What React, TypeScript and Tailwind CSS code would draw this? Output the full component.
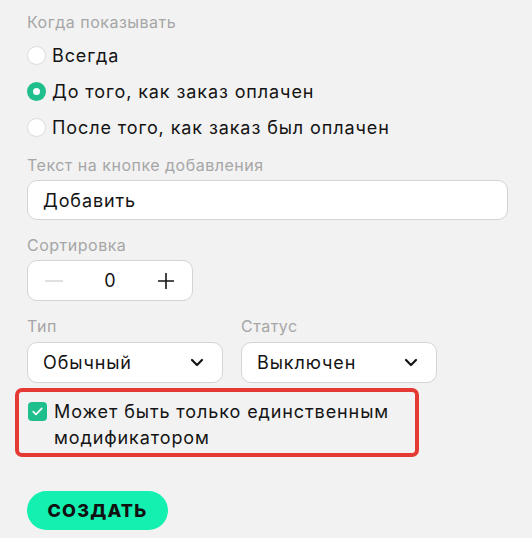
import { useState } from "react";

const Label = ({ children }: { children: React.ReactNode }) => (
  <p className="text-[16px] leading-[20px] tracking-[0.5px] text-[#a6a6a6]">{children}</p>
);

const Radio = ({ checked, label }: { checked: boolean; label: string }) => (
  <div className="flex items-center h-[36px] gap-[6px]">
    {checked ? (
      <span className="w-[19px] h-[19px] rounded-full bg-[#1fbf8d] flex items-center justify-center">
        <span className="w-[7px] h-[7px] rounded-full bg-white" />
      </span>
    ) : (
      <span className="w-[19px] h-[19px] rounded-full bg-white border border-[#dcdcdc]" />
    )}
    <span className="text-[18px] tracking-[0.9px] text-[#141414]">{label}</span>
  </div>
);

const Select = ({ value }: { value: string }) => (
  <div className="flex items-center justify-between w-[196px] h-[41px] bg-white border border-[#d4d4d4] rounded-[10px] pl-[15px] pr-[18px]">
    <span className="text-[18px] tracking-[0.9px] text-[#141414]">{value}</span>
    <svg width="14" height="9" viewBox="0 0 14 9" fill="none">
      <path d="M2 2l5 5 5-5" stroke="#141414" strokeWidth="2.2" strokeLinecap="round" strokeLinejoin="round" />
    </svg>
  </div>
);

const App = () => {
  const [sort, setSort] = useState(0);

  return (
    <div
      className="min-h-[538px] w-[532px] bg-[#f2f2f2] pl-[27px] pt-[12px]"
      style={{ fontFamily: '"Inter", "Noto Sans", sans-serif' }}
    >
      <Label>Когда показывать</Label>
      <div className="mt-[5px]">
        <Radio checked={false} label="Всегда" />
        <Radio checked={true} label="До того, как заказ оплачен" />
        <Radio checked={false} label="После того, как заказ был оплачен" />
      </div>

      <div className="mt-[10px]">
        <Label>Текст на кнопке добавления</Label>
      </div>
      <div className="mt-[5px] w-[481px] h-[40px] bg-white border border-[#d4d4d4] rounded-[10px] flex items-center px-[15px]">
        <span className="text-[18px] tracking-[0.9px] text-[#141414]">Добавить</span>
      </div>

      <div className="mt-[15px]">
        <Label>Сортировка</Label>
      </div>
      <div className="mt-[5px] w-[166px] h-[41px] bg-white border border-[#d4d4d4] rounded-[10px] flex items-center justify-between px-[16px]">
        <button onClick={() => setSort(sort - 1)} className="w-[20px] flex justify-center">
          <svg width="18" height="2" viewBox="0 0 18 2">
            <path d="M0 1h18" stroke="#d9d9d9" strokeWidth="1.6" />
          </svg>
        </button>
        <span className="text-[18px] text-[#141414]">{sort}</span>
        <button onClick={() => setSort(sort + 1)} className="w-[20px] flex justify-center">
          <svg width="16" height="16" viewBox="0 0 16 16">
            <path d="M0 8h16M8 0v16" stroke="#141414" strokeWidth="1.6" />
          </svg>
        </button>
      </div>

      <div className="mt-[15px] flex gap-[18px]">
        <div>
          <Label>Тип</Label>
          <div className="mt-[6px]">
            <Select value="Обычный" />
          </div>
        </div>
        <div>
          <Label>Статус</Label>
          <div className="mt-[6px]">
            <Select value="Выключен" />
          </div>
        </div>
      </div>

      <div className="mt-[5px] -ml-[12px] w-[404px] h-[69px] border-[4px] border-[#e53a33] rounded-[7px] pl-[9px] pt-[7px] flex gap-[7px]">
        <span className="mt-[3px] w-[19px] h-[19px] shrink-0 rounded-[4px] bg-[#1fbf8d] flex items-center justify-center">
          <svg width="11" height="9" viewBox="0 0 11 9" fill="none">
            <path d="M1.2 4.6l2.8 2.8 5.8-6" stroke="white" strokeWidth="1.6" strokeLinecap="round" strokeLinejoin="round" />
          </svg>
        </span>
        <span className="text-[18px] leading-[26px] tracking-[0.9px] text-[#141414]">
          Может быть только единственным модификатором
        </span>
      </div>

      <button className="mt-[34px] w-[141px] h-[39px] rounded-full bg-[#13f0b0] text-[18px] font-extrabold tracking-[1.2px] text-[#111]">
        СОЗДАТЬ
      </button>
    </div>
  );
};

export default App;
